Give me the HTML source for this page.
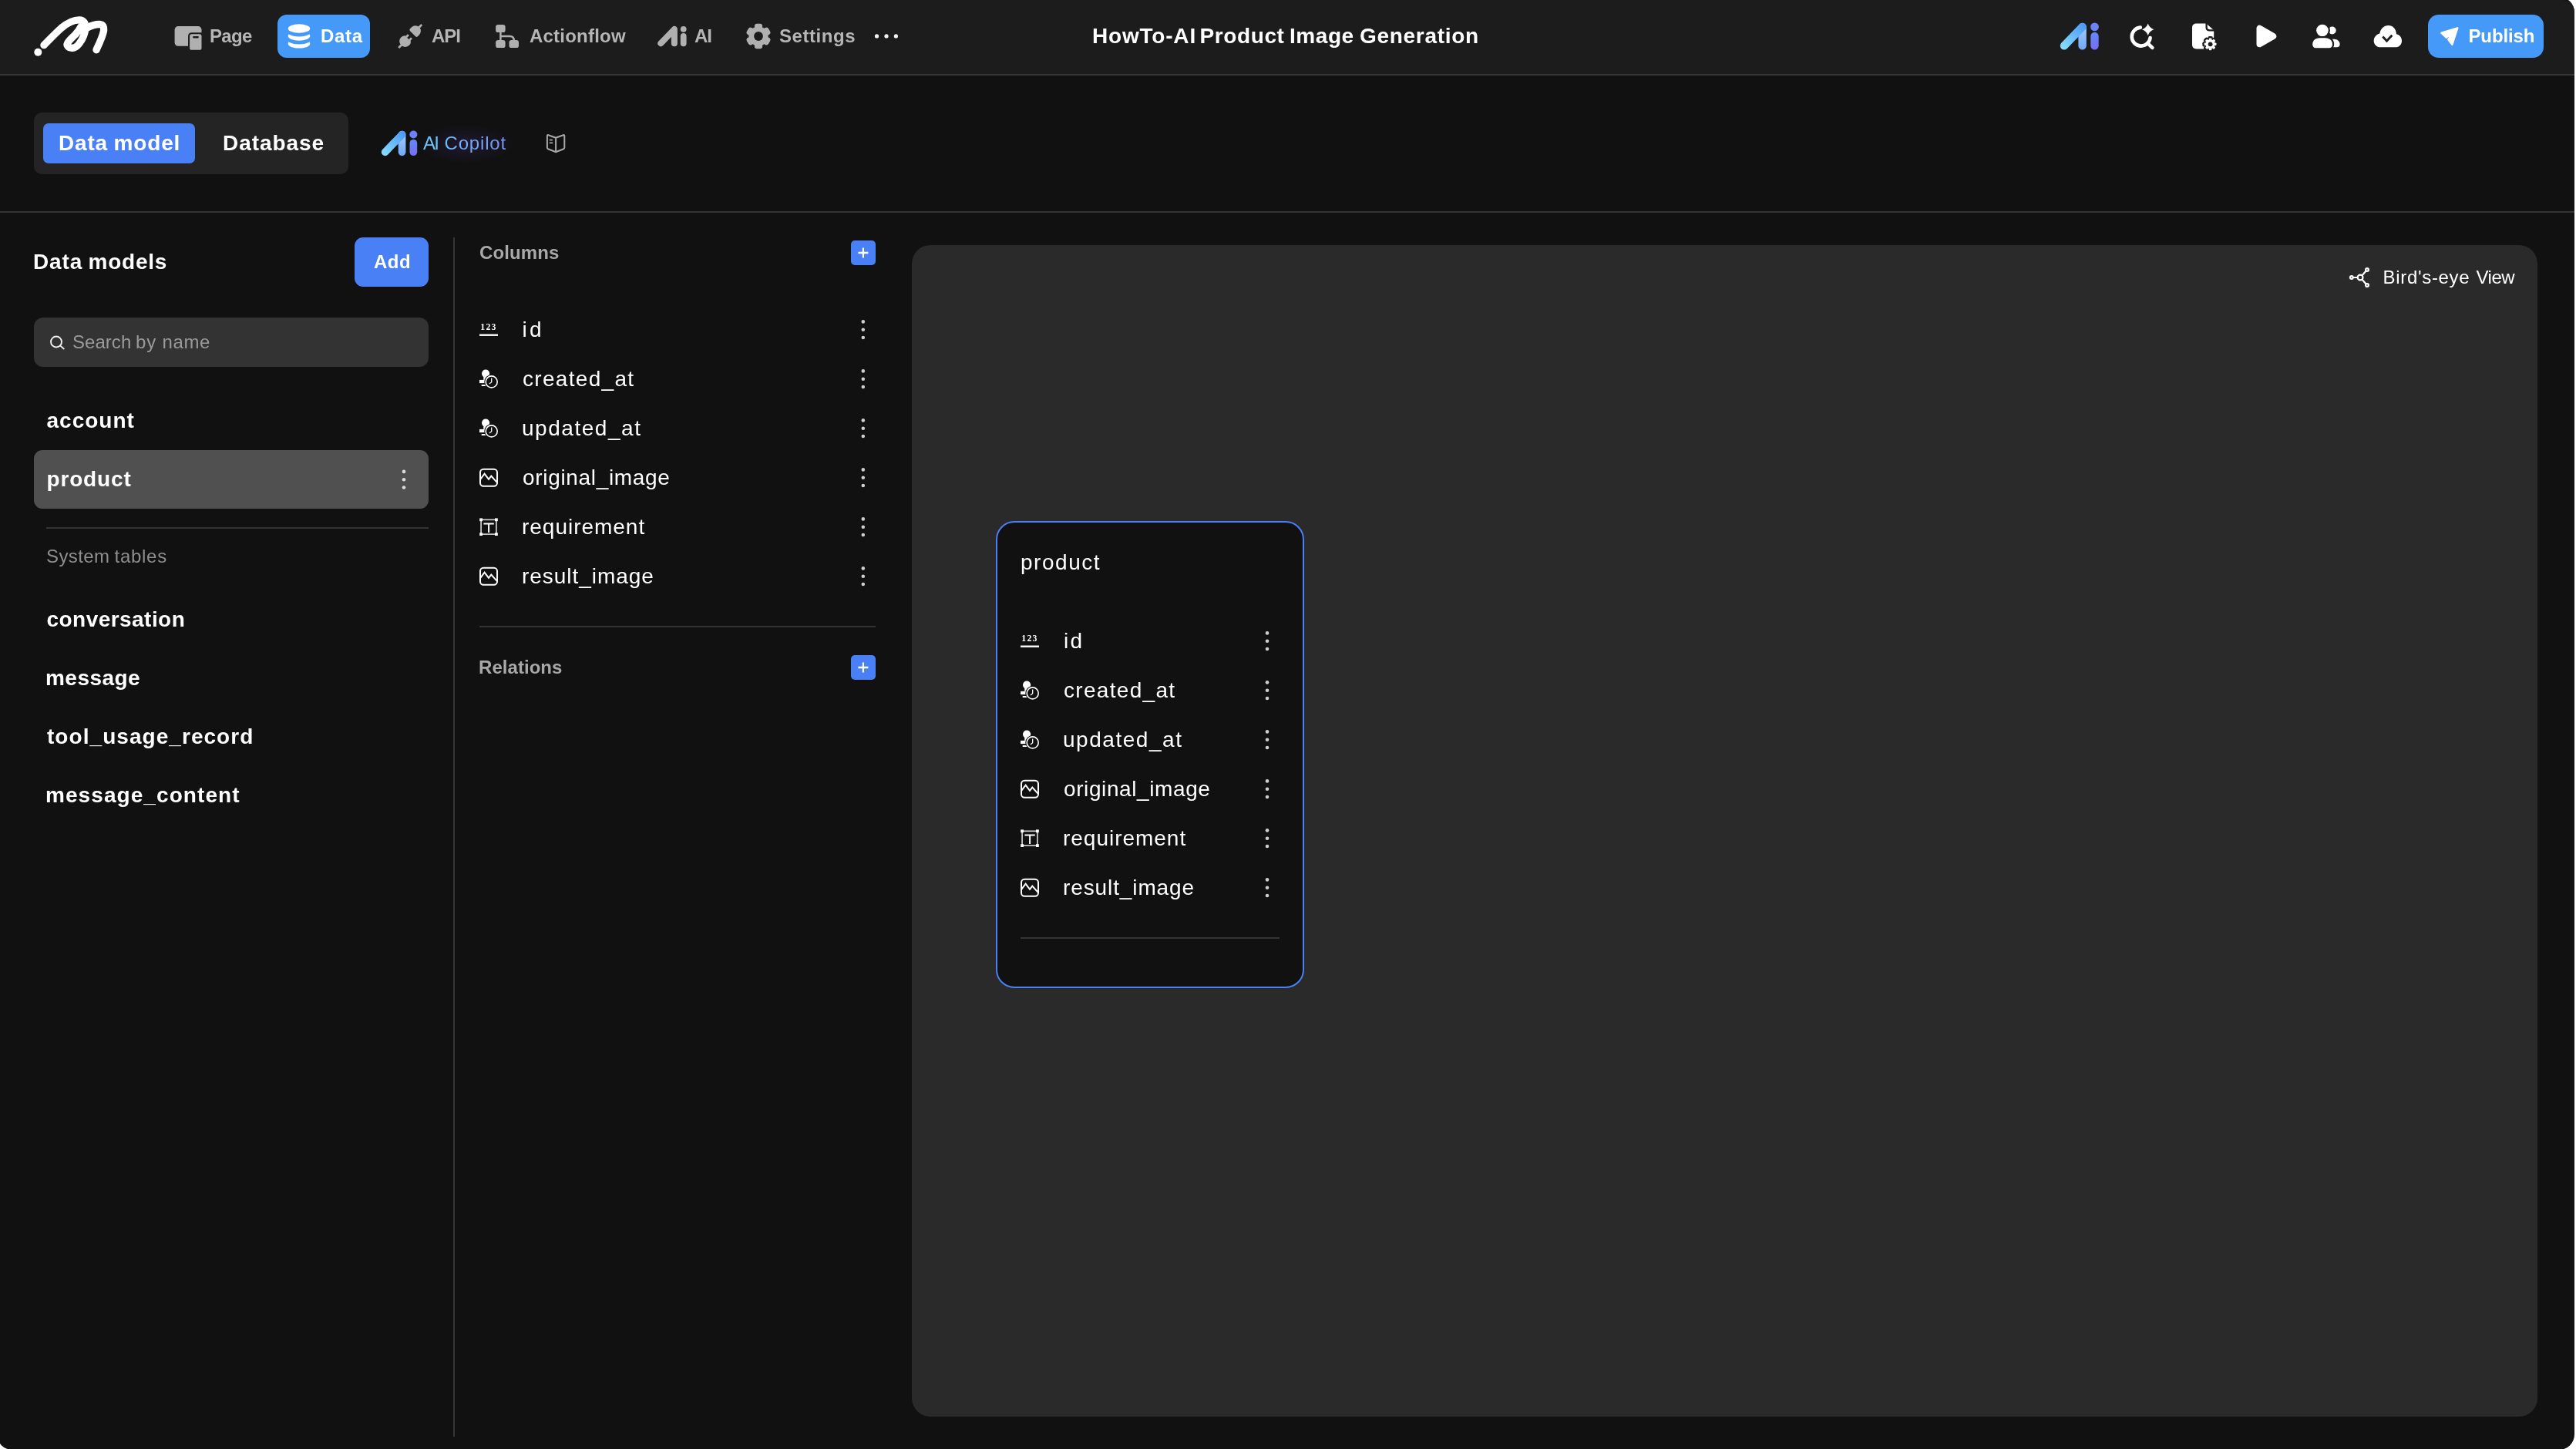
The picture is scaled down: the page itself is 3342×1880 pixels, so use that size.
<!DOCTYPE html>
<html lang="en"><head><meta charset="utf-8"><title>Data model</title>
<style>
html,body{margin:0;padding:0;background:#fff;width:3342px;height:1880px;overflow:hidden}
body{font-family:"Liberation Sans",sans-serif;position:relative}
#win{position:absolute;left:0;top:0;width:3342px;height:1880px;overflow:hidden}
#frame{position:absolute;left:-4px;top:-4px;width:3344px;height:1885px;border-radius:20px;background:#111111}
.t{position:absolute;white-space:nowrap;line-height:1;display:block}
.r{position:absolute;display:block}
svg{position:absolute;overflow:visible}
#txt{position:absolute;left:0;top:0;width:3342px;height:1880px;will-change:transform}

</style></head>
<body>
<div id="win">
<div id="frame"></div>
<div class="r" style="left:0;top:0;width:3340px;height:96px;background:#1c1c1c;border-top-right-radius:16px"></div>
<div class="r" style="left:0;top:96px;width:3340px;height:2px;background:#363636"></div>
<div class="r" style="left:0;top:274px;width:3340px;height:2px;background:#343434"></div>
<!-- nav active -->
<div class="r" style="left:360px;top:19px;width:120px;height:55.5px;border-radius:12px;background:#4599f8"></div>
<div class="r" style="left:3150px;top:19px;width:150px;height:56px;border-radius:14px;background:#4599f8"></div>
<!-- segmented -->
<div class="r" style="left:44px;top:146px;width:408px;height:80px;border-radius:10px;background:#242424"></div>
<div class="r" style="left:56px;top:160px;width:197px;height:52px;border-radius:7px;background:#4a80f5"></div>
<!-- left panel -->
<div class="r" style="left:460px;top:308px;width:96px;height:64px;border-radius:11px;background:#4a80f5"></div>
<div class="r" style="left:588px;top:308px;width:2px;height:1556px;background:#353535"></div>
<div class="r" style="left:44px;top:412px;width:512px;height:64px;border-radius:12px;background:#333"></div>
<div class="r" style="left:44px;top:584px;width:512px;height:76px;border-radius:11px;background:#505050"></div>
<div class="r" style="left:60px;top:684px;width:496px;height:2px;background:#333"></div>
<!-- columns -->
<div class="r" style="left:1104px;top:312px;width:32px;height:32px;border-radius:5px;background:#4a80f5"></div>
<div class="r" style="left:1104px;top:850px;width:32px;height:32px;border-radius:5px;background:#4a80f5"></div>
<div class="r" style="left:622px;top:812px;width:514px;height:2px;background:#333"></div>
<!-- canvas -->
<div class="r" style="left:1183px;top:318px;width:2109px;height:1520px;border-radius:24px;background:#2a2a2a"></div>
<div class="r" style="left:1292px;top:676px;width:400px;height:606px;border-radius:24px;background:#111;border:2px solid #4a80f5;box-sizing:border-box"></div>
<div class="r" style="left:1324px;top:1216px;width:336px;height:2px;background:#333"></div>

<svg width="3342" height="1880" viewBox="0 0 3342 1880" style="left:0;top:0;will-change:transform">
<defs>
<linearGradient id="gA" x1="0" y1="1" x2="1" y2="0"><stop offset="0" stop-color="#86dbfc"/><stop offset="1" stop-color="#4c9bf7"/></linearGradient>
<linearGradient id="gV" x1="0" y1="0" x2="0" y2="1"><stop offset="0" stop-color="#93c2fa"/><stop offset="1" stop-color="#6fa8f8"/></linearGradient>
<linearGradient id="gI" x1="0" y1="0" x2="1" y2="1"><stop offset="0" stop-color="#5f8cf7"/><stop offset="1" stop-color="#7a6bf5"/></linearGradient>
<radialGradient id="glow" cx="0.5" cy="0.5" r="0.5"><stop offset="0" stop-color="#2a1f4a" stop-opacity="0.55"/><stop offset="1" stop-color="#2a1f4a" stop-opacity="0"/></radialGradient>
</defs>
<g fill="none" stroke="#fff" stroke-width="9.4" stroke-linecap="round" stroke-linejoin="round">
<path d="M113,36 C118,33.5 124,31.4 129,31.5 C133.8,31.7 135.2,35 134.6,39.5 C133.8,46 130,54 125,64.7"/>
<path d="M57,58.6 C63,52.5 72,43 80,36 C88,29.5 97,25.8 103,25.9 C108.5,26 111.2,30 110.9,36 C110.5,43 107.5,50.5 102.5,57 C99.3,61 96.3,62.5 93.5,62.3 C88.8,62 86,59.3 87.6,56 C89.6,52 94,48.5 98,44.5 C101,41.2 103.5,37.5 105,34.5"/>
</g><circle cx="49.3" cy="67.7" r="5" fill="#fff"/>
<rect x="226.6" y="34.1" width="34.9" height="25.6" rx="4.5" fill="#b0b0b0"/>
<rect x="244" y="42.2" width="22" height="26" rx="4.5" fill="#1c1c1c"/>
<rect x="246.1" y="44.3" width="15.4" height="20.5" rx="2.6" fill="#b0b0b0"/>
<rect x="250.1" y="47.1" width="7.8" height="2.3" rx="1.15" fill="#1c1c1c"/>
<ellipse cx="388" cy="37" rx="14.3" ry="5.8" fill="#fff"/>
<path transform="translate(0,0)" d="M373.7,46.6 C373.7,50.2 380,52.7 388,52.7 C396,52.7 402.3,50.2 402.3,46.6 C402.3,45.6 401.8,44.9 401.2,44.6 C398,46.5 393.3,47.5 388,47.5 C382.7,47.5 378,46.5 374.8,44.6 C374.2,44.9 373.7,45.6 373.7,46.6 Z" fill="#fff"/>
<path transform="translate(0,9.9)" d="M373.7,46.6 C373.7,50.2 380,52.7 388,52.7 C396,52.7 402.3,50.2 402.3,46.6 C402.3,45.6 401.8,44.9 401.2,44.6 C398,46.5 393.3,47.5 388,47.5 C382.7,47.5 378,46.5 374.8,44.6 C374.2,44.9 373.7,45.6 373.7,46.6 Z" fill="#fff"/>
<g transform="translate(532.2,47) rotate(-45)" fill="#b0b0b0" stroke="none">
<path d="M-4.1,-5.27 A7.4,7.4 0 1 0 -4.1,5.27 Z"/>
<rect x="-4.6" y="-4.3" width="4.3" height="2.8" rx="0.5"/><rect x="-4.6" y="1.5" width="4.3" height="2.8" rx="0.5"/>
<rect x="-21.2" y="-1.35" width="6" height="2.7"/>
<path d="M4.7,-5 Q4.7,-7 6.7,-7 L9.5,-7 A7,7 0 0 1 9.5,7 L6.7,7 Q4.7,7 4.7,5 Z"/>
<rect x="15.5" y="-1.35" width="5.7" height="2.7"/>
</g>
<rect x="643.1" y="32.1" width="12.5" height="10" rx="3.2" fill="#b0b0b0"/>
<rect x="643.1" y="52.1" width="12.5" height="10" rx="3.2" fill="#b0b0b0"/>
<rect x="660.5" y="52.1" width="12.5" height="10" rx="3.2" fill="#b0b0b0"/>
<path d="M649.4,41 V53 M649.4,47 H661.5 Q666.7,47 666.7,52.5" fill="none" stroke="#b0b0b0" stroke-width="2.5"/>
<path d="M857.3,56.2 L874.9,37.9 L874.9,56.2" fill="none" stroke="#b0b0b0" stroke-width="8" stroke-linecap="round" stroke-linejoin="round"/>
<circle cx="886.7" cy="37.8" r="3.9" fill="#b0b0b0"/><path d="M886.7,46.9 V56.3" stroke="#b0b0b0" stroke-width="7.8" stroke-linecap="round"/>
<g transform="translate(984,47)" ><circle r="12.6" fill="#b0b0b0"/><rect transform="rotate(0.0)" x="-5.1" y="-16.2" width="10.2" height="16.2" rx="3.2" fill="#b0b0b0"/><rect transform="rotate(60.0)" x="-5.1" y="-16.2" width="10.2" height="16.2" rx="3.2" fill="#b0b0b0"/><rect transform="rotate(120.0)" x="-5.1" y="-16.2" width="10.2" height="16.2" rx="3.2" fill="#b0b0b0"/><rect transform="rotate(180.0)" x="-5.1" y="-16.2" width="10.2" height="16.2" rx="3.2" fill="#b0b0b0"/><rect transform="rotate(240.0)" x="-5.1" y="-16.2" width="10.2" height="16.2" rx="3.2" fill="#b0b0b0"/><rect transform="rotate(300.0)" x="-5.1" y="-16.2" width="10.2" height="16.2" rx="3.2" fill="#b0b0b0"/><circle r="5.9" fill="#1c1c1c"/></g>
<circle cx="1137.5" cy="46.9" r="2.6" fill="#f2f2f2"/>
<circle cx="1150" cy="46.9" r="2.6" fill="#f2f2f2"/>
<circle cx="1162.4" cy="46.9" r="2.6" fill="#f2f2f2"/>
<defs><linearGradient id="gAa" gradientUnits="userSpaceOnUse" x1="2676.0" y1="62.0" x2="2704.0" y2="33.0"><stop offset="0" stop-color="#86dbfc"/><stop offset="1" stop-color="#4c9bf7"/></linearGradient><linearGradient id="gVa" gradientUnits="userSpaceOnUse" x1="2701.0" y1="38.0" x2="2701.0" y2="64.0"><stop offset="0" stop-color="#9cc6fa"/><stop offset="1" stop-color="#6fa9f8"/></linearGradient><linearGradient id="gIa" gradientUnits="userSpaceOnUse" x1="2712.0" y1="42.0" x2="2723.0" y2="64.0"><stop offset="0" stop-color="#5f8cf7"/><stop offset="1" stop-color="#7a6bf5"/></linearGradient></defs><path d="M2701.60,34.90 V59.40" stroke="url(#gVa)" stroke-width="10.40" stroke-linecap="round" fill="none"/><path d="M2678.00,59.40 L2701.60,34.90" stroke="url(#gAa)" stroke-width="10.40" stroke-linecap="round" fill="none"/><circle cx="2717.50" cy="34.90" r="5.40" fill="#6a83f6"/><path d="M2717.50,47.00 V59.30" stroke="url(#gIa)" stroke-width="10.40" stroke-linecap="round" fill="none"/>
<ellipse cx="604" cy="187" rx="64" ry="26" fill="url(#glow)"/>
<defs><linearGradient id="gAb" gradientUnits="userSpaceOnUse" x1="497.8" y1="199.7" x2="523.8" y2="172.8"><stop offset="0" stop-color="#86dbfc"/><stop offset="1" stop-color="#4c9bf7"/></linearGradient><linearGradient id="gVb" gradientUnits="userSpaceOnUse" x1="521.0" y1="177.4" x2="521.0" y2="201.6"><stop offset="0" stop-color="#9cc6fa"/><stop offset="1" stop-color="#6fa9f8"/></linearGradient><linearGradient id="gIb" gradientUnits="userSpaceOnUse" x1="531.2" y1="181.1" x2="541.5" y2="201.6"><stop offset="0" stop-color="#5f8cf7"/><stop offset="1" stop-color="#7a6bf5"/></linearGradient></defs><path d="M521.58,174.53 V197.31" stroke="url(#gVb)" stroke-width="9.67" stroke-linecap="round" fill="none"/><path d="M499.63,197.31 L521.58,174.53" stroke="url(#gAb)" stroke-width="9.67" stroke-linecap="round" fill="none"/><circle cx="536.36" cy="174.53" r="5.02" fill="#6a83f6"/><path d="M536.36,185.78 V197.22" stroke="url(#gIb)" stroke-width="9.67" stroke-linecap="round" fill="none"/>
<path d="M2789.61,49.06 A12,12 0 1 1 2776.86,35.63" fill="none" stroke="#fff" stroke-width="4.6" stroke-linecap="round"/>
<path d="M2786.8,56.7 L2792.3,61.9" stroke="#fff" stroke-width="4.6" stroke-linecap="round"/>
<path d="M2786.7,30.599999999999998 Q2788.6,36.4 2794.3999999999996,38.3 Q2788.6,40.199999999999996 2786.7,46.0 Q2784.7999999999997,40.199999999999996 2779.0,38.3 Q2784.7999999999997,36.4 2786.7,30.599999999999998 Z" fill="#fff"/>
<path d="M2849.5,30.5 H2862.3 L2872.2,39.2 V58 Q2872.2,63.4 2866.8,63.4 H2849.5 Q2844,63.4 2844,58 V36 Q2844,30.5 2849.5,30.5 Z" fill="#fff"/>
<path d="M2862.6,30 V35.3 Q2862.6,39.4 2866.8,39.4 H2873" fill="none" stroke="#1c1c1c" stroke-width="2.3"/>
<g transform="translate(2867.6,57.3)" ><circle r="8.3" fill="#1c1c1c"/><rect transform="rotate(0.0)" x="-3.3" y="-10.3" width="6.6" height="10.3" rx="2.2" fill="#1c1c1c"/><rect transform="rotate(45.0)" x="-3.3" y="-10.3" width="6.6" height="10.3" rx="2.2" fill="#1c1c1c"/><rect transform="rotate(90.0)" x="-3.3" y="-10.3" width="6.6" height="10.3" rx="2.2" fill="#1c1c1c"/><rect transform="rotate(135.0)" x="-3.3" y="-10.3" width="6.6" height="10.3" rx="2.2" fill="#1c1c1c"/><rect transform="rotate(180.0)" x="-3.3" y="-10.3" width="6.6" height="10.3" rx="2.2" fill="#1c1c1c"/><rect transform="rotate(225.0)" x="-3.3" y="-10.3" width="6.6" height="10.3" rx="2.2" fill="#1c1c1c"/><rect transform="rotate(270.0)" x="-3.3" y="-10.3" width="6.6" height="10.3" rx="2.2" fill="#1c1c1c"/><rect transform="rotate(315.0)" x="-3.3" y="-10.3" width="6.6" height="10.3" rx="2.2" fill="#1c1c1c"/><circle r="0" fill="#1c1c1c"/></g>
<g transform="translate(2867.6,57.3)" ><circle r="6.0" fill="#fff"/><rect transform="rotate(0.0)" x="-1.8" y="-7.9" width="3.6" height="7.9" rx="1.0" fill="#fff"/><rect transform="rotate(45.0)" x="-1.8" y="-7.9" width="3.6" height="7.9" rx="1.0" fill="#fff"/><rect transform="rotate(90.0)" x="-1.8" y="-7.9" width="3.6" height="7.9" rx="1.0" fill="#fff"/><rect transform="rotate(135.0)" x="-1.8" y="-7.9" width="3.6" height="7.9" rx="1.0" fill="#fff"/><rect transform="rotate(180.0)" x="-1.8" y="-7.9" width="3.6" height="7.9" rx="1.0" fill="#fff"/><rect transform="rotate(225.0)" x="-1.8" y="-7.9" width="3.6" height="7.9" rx="1.0" fill="#fff"/><rect transform="rotate(270.0)" x="-1.8" y="-7.9" width="3.6" height="7.9" rx="1.0" fill="#fff"/><rect transform="rotate(315.0)" x="-1.8" y="-7.9" width="3.6" height="7.9" rx="1.0" fill="#fff"/><circle r="2.9" fill="#1c1c1c"/></g>
<path d="M2931.5,36.7 L2931.5,57.3 L2949.3,47 Z" fill="#fff" stroke="#fff" stroke-width="8" stroke-linejoin="round"/>
<circle cx="3025.7" cy="39.5" r="5" fill="#fff"/>
<path d="M3022,50.7 H3028 C3032.5,50.7 3035.6,53.5 3035.6,57.5 C3035.6,60 3034,61.3 3032,61.3 H3022 Z" fill="#fff"/>
<circle cx="3012.95" cy="39.5" r="7.8" fill="#fff" stroke="#1c1c1c" stroke-width="4.4" paint-order="stroke"/>
<path d="M3000.2,57.5 C3000.2,52 3004.5,49.2 3009.5,49.2 H3016.5 C3021.5,49.2 3026,52 3026,57.5 C3026,60.5 3024.3,62.2 3021.8,62.2 H3004.4 C3001.9,62.2 3000.2,60.5 3000.2,57.5 Z" fill="#fff" stroke="#1c1c1c" stroke-width="4.4" paint-order="stroke"/>
<path d="M3088.5,61.3 C3083.3,61.3 3079.7,57.6 3079.7,53 C3079.7,48.3 3083,44.8 3087.3,43.6 C3088.3,37.5 3092.8,33 3098.5,33 C3104.6,33 3108.6,37.8 3109,44.3 C3113.2,45.2 3116,48.6 3116,53 C3116,57.6 3112.6,61.3 3107.8,61.3 Z" fill="#fff"/>
<path d="M3091.3,47.6 L3096.5,53.2 L3103.3,45.7" fill="none" stroke="#1c1c1c" stroke-width="2.9"/>
<path d="M3188.3,36.3 L3167.3,42.6 L3173.7,48.7 L3183.3,41.7 L3176.3,51.3 L3181.3,57.8 Z" fill="#fff" stroke="#fff" stroke-width="2.4" stroke-linejoin="round"/>
<path d="M721.1,178.8 L711.3,175.2 Q709.9,174.8 709.9,176.3 V191.6 Q709.9,192.8 711,193.2 L721.1,197.2 L731.2,193.2 Q732.3,192.8 732.3,191.6 V176.3 Q732.3,174.8 730.9,175.2 Z M721.1,178.8 V197.2" fill="none" stroke="#a8a8a8" stroke-width="2" stroke-linejoin="round"/>
<path d="M712.8,181.6 H716.8 M712.8,185.4 H717.2" stroke="#a8a8a8" stroke-width="1.8"/>
<circle cx="73" cy="443.5" r="7" fill="none" stroke="#f0f0f0" stroke-width="1.9"/><path d="M78.2,448.6 L82.8,452.5" stroke="#f0f0f0" stroke-width="1.9" stroke-linecap="round"/>
<circle cx="524" cy="611.9000000000001" r="2.3" fill="#dcdcdc"/><circle cx="524" cy="622.2" r="2.3" fill="#dcdcdc"/><circle cx="524" cy="632.5" r="2.3" fill="#dcdcdc"/>
<circle cx="1119.8" cy="417.4" r="2.3" fill="#cfcfcf"/><circle cx="1119.8" cy="427.7" r="2.3" fill="#cfcfcf"/><circle cx="1119.8" cy="438.0" r="2.3" fill="#cfcfcf"/>
<circle cx="1644" cy="821.4000000000001" r="2.3" fill="#cfcfcf"/><circle cx="1644" cy="831.7" r="2.3" fill="#cfcfcf"/><circle cx="1644" cy="842.0" r="2.3" fill="#cfcfcf"/>
<circle cx="1119.8" cy="481.4" r="2.3" fill="#cfcfcf"/><circle cx="1119.8" cy="491.7" r="2.3" fill="#cfcfcf"/><circle cx="1119.8" cy="502.0" r="2.3" fill="#cfcfcf"/>
<circle cx="1644" cy="885.4000000000001" r="2.3" fill="#cfcfcf"/><circle cx="1644" cy="895.7" r="2.3" fill="#cfcfcf"/><circle cx="1644" cy="906.0" r="2.3" fill="#cfcfcf"/>
<circle cx="1119.8" cy="545.4000000000001" r="2.3" fill="#cfcfcf"/><circle cx="1119.8" cy="555.7" r="2.3" fill="#cfcfcf"/><circle cx="1119.8" cy="566.0" r="2.3" fill="#cfcfcf"/>
<circle cx="1644" cy="949.4000000000001" r="2.3" fill="#cfcfcf"/><circle cx="1644" cy="959.7" r="2.3" fill="#cfcfcf"/><circle cx="1644" cy="970.0" r="2.3" fill="#cfcfcf"/>
<circle cx="1119.8" cy="609.4000000000001" r="2.3" fill="#cfcfcf"/><circle cx="1119.8" cy="619.7" r="2.3" fill="#cfcfcf"/><circle cx="1119.8" cy="630.0" r="2.3" fill="#cfcfcf"/>
<circle cx="1644" cy="1013.4000000000001" r="2.3" fill="#cfcfcf"/><circle cx="1644" cy="1023.7" r="2.3" fill="#cfcfcf"/><circle cx="1644" cy="1034.0" r="2.3" fill="#cfcfcf"/>
<circle cx="1119.8" cy="673.4000000000001" r="2.3" fill="#cfcfcf"/><circle cx="1119.8" cy="683.7" r="2.3" fill="#cfcfcf"/><circle cx="1119.8" cy="694.0" r="2.3" fill="#cfcfcf"/>
<circle cx="1644" cy="1077.4" r="2.3" fill="#cfcfcf"/><circle cx="1644" cy="1087.7" r="2.3" fill="#cfcfcf"/><circle cx="1644" cy="1098.0" r="2.3" fill="#cfcfcf"/>
<circle cx="1119.8" cy="737.4000000000001" r="2.3" fill="#cfcfcf"/><circle cx="1119.8" cy="747.7" r="2.3" fill="#cfcfcf"/><circle cx="1119.8" cy="758.0" r="2.3" fill="#cfcfcf"/>
<circle cx="1644" cy="1141.4" r="2.3" fill="#cfcfcf"/><circle cx="1644" cy="1151.7" r="2.3" fill="#cfcfcf"/><circle cx="1644" cy="1162.0" r="2.3" fill="#cfcfcf"/>
<path d="M1113.4,328 H1126.4 M1119.9,321.5 V334.5" stroke="#fff" stroke-width="2.3"/>
<path d="M1113.4,866 H1126.4 M1119.9,859.5 V872.5" stroke="#fff" stroke-width="2.3"/>
<text x="634" y="428.2" text-anchor="middle" font-family="Liberation Serif" font-weight="700" font-size="11.8" fill="#fff" letter-spacing="1.25">123</text><rect x="622" y="433.5" width="24" height="2.4" fill="#fff"/>
<g transform="translate(0,-0.19999999999998863)"><circle cx="630.1" cy="484.9" r="5.1" fill="#fff"/><path d="M627.3,488 H633 V494 H627.3 Z" fill="#fff"/><rect x="622" y="493.1" width="9" height="4.2" fill="#fff"/><rect x="624.7" y="499.2" width="6" height="2" fill="#fff"/><circle cx="637.7" cy="495.6" r="9.4" fill="#111111"/><circle cx="637.7" cy="495.6" r="7.5" fill="none" stroke="#fff" stroke-width="1.6"/><path d="M637.7,490.6 V495.9 L634.9,498.2" fill="none" stroke="#fff" stroke-width="1.3"/></g>
<g transform="translate(0,63.80000000000007)"><circle cx="630.1" cy="484.9" r="5.1" fill="#fff"/><path d="M627.3,488 H633 V494 H627.3 Z" fill="#fff"/><rect x="622" y="493.1" width="9" height="4.2" fill="#fff"/><rect x="624.7" y="499.2" width="6" height="2" fill="#fff"/><circle cx="637.7" cy="495.6" r="9.4" fill="#111111"/><circle cx="637.7" cy="495.6" r="7.5" fill="none" stroke="#fff" stroke-width="1.6"/><path d="M637.7,490.6 V495.9 L634.9,498.2" fill="none" stroke="#fff" stroke-width="1.3"/></g>
<g transform="translate(0,-0.09999999999990905)" fill="none" stroke="#fff" stroke-width="2"><rect x="623" y="608.8" width="22" height="22" rx="4.2"/><path d="M623.2,621.9 L628.6,614.8 L634,621.9 L637.3,617.7 L645.2,626.4" stroke-linejoin="miter"/></g>
<g transform="translate(0,-0.09999999999990905)"><rect x="624.1" y="674.4" width="19.8" height="18.8" fill="none" stroke="#cfcfcf" stroke-width="1.7"/><rect x="622.2" y="672.5" width="3.8" height="3.8" fill="#fff"/><rect x="642.0" y="672.5" width="3.8" height="3.8" fill="#fff"/><rect x="622.2" y="691.3000000000001" width="3.8" height="3.8" fill="#fff"/><rect x="642.0" y="691.3000000000001" width="3.8" height="3.8" fill="#fff"/><path d="M627.4,679.5 H640.8 M634.1,679.5 V691" stroke="#fff" stroke-width="2" fill="none"/></g>
<g transform="translate(0,127.90000000000009)" fill="none" stroke="#fff" stroke-width="2"><rect x="623" y="608.8" width="22" height="22" rx="4.2"/><path d="M623.2,621.9 L628.6,614.8 L634,621.9 L637.3,617.7 L645.2,626.4" stroke-linejoin="miter"/></g>
<text x="1336" y="832.2" text-anchor="middle" font-family="Liberation Serif" font-weight="700" font-size="11.8" fill="#fff" letter-spacing="1.25">123</text><rect x="1324" y="837.5" width="24" height="2.4" fill="#fff"/>
<g transform="translate(702,403.80000000000007)"><circle cx="630.1" cy="484.9" r="5.1" fill="#fff"/><path d="M627.3,488 H633 V494 H627.3 Z" fill="#fff"/><rect x="622" y="493.1" width="9" height="4.2" fill="#fff"/><rect x="624.7" y="499.2" width="6" height="2" fill="#fff"/><circle cx="637.7" cy="495.6" r="9.4" fill="#111111"/><circle cx="637.7" cy="495.6" r="7.5" fill="none" stroke="#fff" stroke-width="1.6"/><path d="M637.7,490.6 V495.9 L634.9,498.2" fill="none" stroke="#fff" stroke-width="1.3"/></g>
<g transform="translate(702,467.80000000000007)"><circle cx="630.1" cy="484.9" r="5.1" fill="#fff"/><path d="M627.3,488 H633 V494 H627.3 Z" fill="#fff"/><rect x="622" y="493.1" width="9" height="4.2" fill="#fff"/><rect x="624.7" y="499.2" width="6" height="2" fill="#fff"/><circle cx="637.7" cy="495.6" r="9.4" fill="#111111"/><circle cx="637.7" cy="495.6" r="7.5" fill="none" stroke="#fff" stroke-width="1.6"/><path d="M637.7,490.6 V495.9 L634.9,498.2" fill="none" stroke="#fff" stroke-width="1.3"/></g>
<g transform="translate(702,403.9000000000001)" fill="none" stroke="#fff" stroke-width="2"><rect x="623" y="608.8" width="22" height="22" rx="4.2"/><path d="M623.2,621.9 L628.6,614.8 L634,621.9 L637.3,617.7 L645.2,626.4" stroke-linejoin="miter"/></g>
<g transform="translate(702,403.9000000000001)"><rect x="624.1" y="674.4" width="19.8" height="18.8" fill="none" stroke="#cfcfcf" stroke-width="1.7"/><rect x="622.2" y="672.5" width="3.8" height="3.8" fill="#fff"/><rect x="642.0" y="672.5" width="3.8" height="3.8" fill="#fff"/><rect x="622.2" y="691.3000000000001" width="3.8" height="3.8" fill="#fff"/><rect x="642.0" y="691.3000000000001" width="3.8" height="3.8" fill="#fff"/><path d="M627.4,679.5 H640.8 M634.1,679.5 V691" stroke="#fff" stroke-width="2" fill="none"/></g>
<g transform="translate(702,531.9000000000001)" fill="none" stroke="#fff" stroke-width="2"><rect x="623" y="608.8" width="22" height="22" rx="4.2"/><path d="M623.2,621.9 L628.6,614.8 L634,621.9 L637.3,617.7 L645.2,626.4" stroke-linejoin="miter"/></g>
<g fill="none" stroke="#fff" stroke-width="2.2"><circle cx="3062.1" cy="360" r="3.4"/><circle cx="3050.8" cy="360" r="1.9"/><circle cx="3071" cy="350" r="1.9"/><circle cx="3071" cy="370.1" r="1.9"/><path d="M3052.7,360 H3058.7 M3064.4,357.4 L3069.6,351.6 M3064.4,362.6 L3069.6,368.5"/></g>
</svg>
<div id="txt">
<span id="n_page" class="t" style="left:272.00px;top:35.00px;font-size:24px;font-weight:700;color:#b6b6b6;letter-spacing:-0.667px;">Page</span>
<span id="n_data" class="t" style="left:416.00px;top:35.00px;font-size:24px;font-weight:700;color:#fff;letter-spacing:0.667px;">Data</span>
<span id="n_api" class="t" style="left:560.00px;top:35.00px;font-size:24px;font-weight:700;color:#b6b6b6;letter-spacing:-1.000px;">API</span>
<span id="n_af" class="t" style="left:687.00px;top:35.00px;font-size:24px;font-weight:700;color:#b6b6b6;letter-spacing:0.222px;">Actionflow</span>
<span id="n_ai" class="t" style="left:901.00px;top:35.00px;font-size:24px;font-weight:700;color:#b6b6b6;letter-spacing:-1.000px;">AI</span>
<span id="n_set" class="t" style="left:1011.00px;top:35.00px;font-size:24px;font-weight:700;color:#b6b6b6;letter-spacing:0.571px;">Settings</span>
<span id="ti1" class="t" style="left:1417.00px;top:33.00px;font-size:28px;font-weight:700;color:#fff;letter-spacing:0.800px;">HowTo-AI</span>
<span id="ti2" class="t" style="left:1556.50px;top:33.00px;font-size:28px;font-weight:700;color:#fff;letter-spacing:0.600px;">Product</span>
<span id="ti3" class="t" style="left:1673.00px;top:33.00px;font-size:28px;font-weight:700;color:#fff;letter-spacing:0.550px;">Image</span>
<span id="ti4" class="t" style="left:1764.00px;top:33.00px;font-size:28px;font-weight:700;color:#fff;letter-spacing:0.711px;">Generation</span>
<span id="publish" class="t" style="left:3202.50px;top:35.00px;font-size:24px;font-weight:700;color:#fff;letter-spacing:-0.133px;">Publish</span>
<span id="dm1" class="t" style="left:76.00px;top:172.00px;font-size:28px;font-weight:700;color:#fff;letter-spacing:0.800px;">Data</span>
<span id="dm2" class="t" style="left:147.50px;top:172.00px;font-size:28px;font-weight:700;color:#fff;letter-spacing:0.850px;">model</span>
<span id="db" class="t" style="left:289.00px;top:172.00px;font-size:28px;font-weight:700;color:#fff;letter-spacing:0.943px;">Database</span>
<span id="cop1" class="t" style="left:549.00px;top:174.00px;font-size:24px;font-weight:400;color:#6ec4f7;letter-spacing:-1.800px;">AI</span>
<span id="cop2" class="t" style="left:576.50px;top:174.00px;font-size:24px;font-weight:400;color:#79a5f8;letter-spacing:0.833px;background:linear-gradient(90deg,#6cbcf7,#7e92f8);-webkit-background-clip:text;background-clip:text;color:transparent;">Copilot</span>
<span id="dmh1" class="t" style="left:43.00px;top:326.00px;font-size:28px;font-weight:700;color:#fff;letter-spacing:0.867px;">Data</span>
<span id="dmh2" class="t" style="left:114.50px;top:326.00px;font-size:28px;font-weight:700;color:#fff;letter-spacing:0.760px;">models</span>
<span id="add" class="t" style="left:485.00px;top:328.00px;font-size:24px;font-weight:700;color:#fff;letter-spacing:0.500px;">Add</span>
<span id="se1" class="t" style="left:94.00px;top:432.00px;font-size:24px;font-weight:400;color:#9a9a9a;letter-spacing:0.040px;">Search</span>
<span id="se2" class="t" style="left:176.00px;top:432.00px;font-size:24px;font-weight:400;color:#9a9a9a;letter-spacing:1.000px;">by</span>
<span id="se3" class="t" style="left:210.50px;top:432.00px;font-size:24px;font-weight:400;color:#9a9a9a;letter-spacing:0.600px;">name</span>
<span id="l_acc" class="t" style="left:60.50px;top:532.00px;font-size:28px;font-weight:700;color:#fff;letter-spacing:1.000px;">account</span>
<span id="l_prod" class="t" style="left:60.50px;top:608.00px;font-size:28px;font-weight:700;color:#fff;letter-spacing:0.833px;">product</span>
<span id="sy1" class="t" style="left:60.00px;top:710.00px;font-size:24px;font-weight:400;color:#8e8e8e;letter-spacing:0.400px;">System</span>
<span id="sy2" class="t" style="left:148.50px;top:710.00px;font-size:24px;font-weight:400;color:#8e8e8e;letter-spacing:0.720px;">tables</span>
<span id="l_conv" class="t" style="left:60.50px;top:790.00px;font-size:28px;font-weight:700;color:#fff;letter-spacing:0.455px;">conversation</span>
<span id="l_msg" class="t" style="left:59.00px;top:866.00px;font-size:28px;font-weight:700;color:#fff;letter-spacing:0.467px;">message</span>
<span id="l_tool" class="t" style="left:61.00px;top:942.00px;font-size:28px;font-weight:700;color:#fff;letter-spacing:1.050px;">tool_usage_record</span>
<span id="l_mc" class="t" style="left:59.00px;top:1018.00px;font-size:28px;font-weight:700;color:#fff;letter-spacing:1.071px;">message_content</span>
<span id="c_h" class="t" style="left:622.00px;top:316.00px;font-size:24px;font-weight:700;color:#a8a8a8;letter-spacing:0.100px;">Columns</span>
<span id="c_id" class="t" style="left:677.50px;top:414.00px;font-size:28px;font-weight:400;color:#fff;letter-spacing:3.200px;">id</span>
<span id="c_cr" class="t" style="left:678.00px;top:478.00px;font-size:28px;font-weight:400;color:#fff;letter-spacing:1.311px;">created_at</span>
<span id="c_up" class="t" style="left:677.00px;top:542.00px;font-size:28px;font-weight:400;color:#fff;letter-spacing:1.533px;">updated_at</span>
<span id="c_or" class="t" style="left:678.00px;top:606.00px;font-size:28px;font-weight:400;color:#fff;letter-spacing:0.677px;">original_image</span>
<span id="c_rq" class="t" style="left:677.00px;top:670.00px;font-size:28px;font-weight:400;color:#fff;letter-spacing:0.980px;">requirement</span>
<span id="c_rs" class="t" style="left:677.00px;top:734.00px;font-size:28px;font-weight:400;color:#fff;letter-spacing:0.964px;">result_image</span>
<span id="c_rel" class="t" style="left:621.00px;top:854.00px;font-size:24px;font-weight:700;color:#a8a8a8;letter-spacing:0.050px;">Relations</span>
<span id="bv1" class="t" style="left:3091.50px;top:348.00px;font-size:24px;font-weight:400;color:#fff;letter-spacing:0.689px;">Bird&#39;s-eye</span>
<span id="bv2" class="t" style="left:3212.50px;top:348.00px;font-size:24px;font-weight:400;color:#fff;letter-spacing:-0.467px;">View</span>
<span id="k_h" class="t" style="left:1324.00px;top:716.00px;font-size:28px;font-weight:400;color:#fff;letter-spacing:1.533px;">product</span>
<span id="k_id" class="t" style="left:1380.00px;top:818.00px;font-size:28px;font-weight:400;color:#fff;letter-spacing:2.400px;">id</span>
<span id="k_cr" class="t" style="left:1380.00px;top:882.00px;font-size:28px;font-weight:400;color:#fff;letter-spacing:1.311px;">created_at</span>
<span id="k_up" class="t" style="left:1379.00px;top:946.00px;font-size:28px;font-weight:400;color:#fff;letter-spacing:1.533px;">updated_at</span>
<span id="k_or" class="t" style="left:1380.00px;top:1010.00px;font-size:28px;font-weight:400;color:#fff;letter-spacing:0.600px;">original_image</span>
<span id="k_rq" class="t" style="left:1379.00px;top:1074.00px;font-size:28px;font-weight:400;color:#fff;letter-spacing:0.980px;">requirement</span>
<span id="k_rs" class="t" style="left:1379.00px;top:1138.00px;font-size:28px;font-weight:400;color:#fff;letter-spacing:0.891px;">result_image</span>
</div>
</div>
</body></html>
